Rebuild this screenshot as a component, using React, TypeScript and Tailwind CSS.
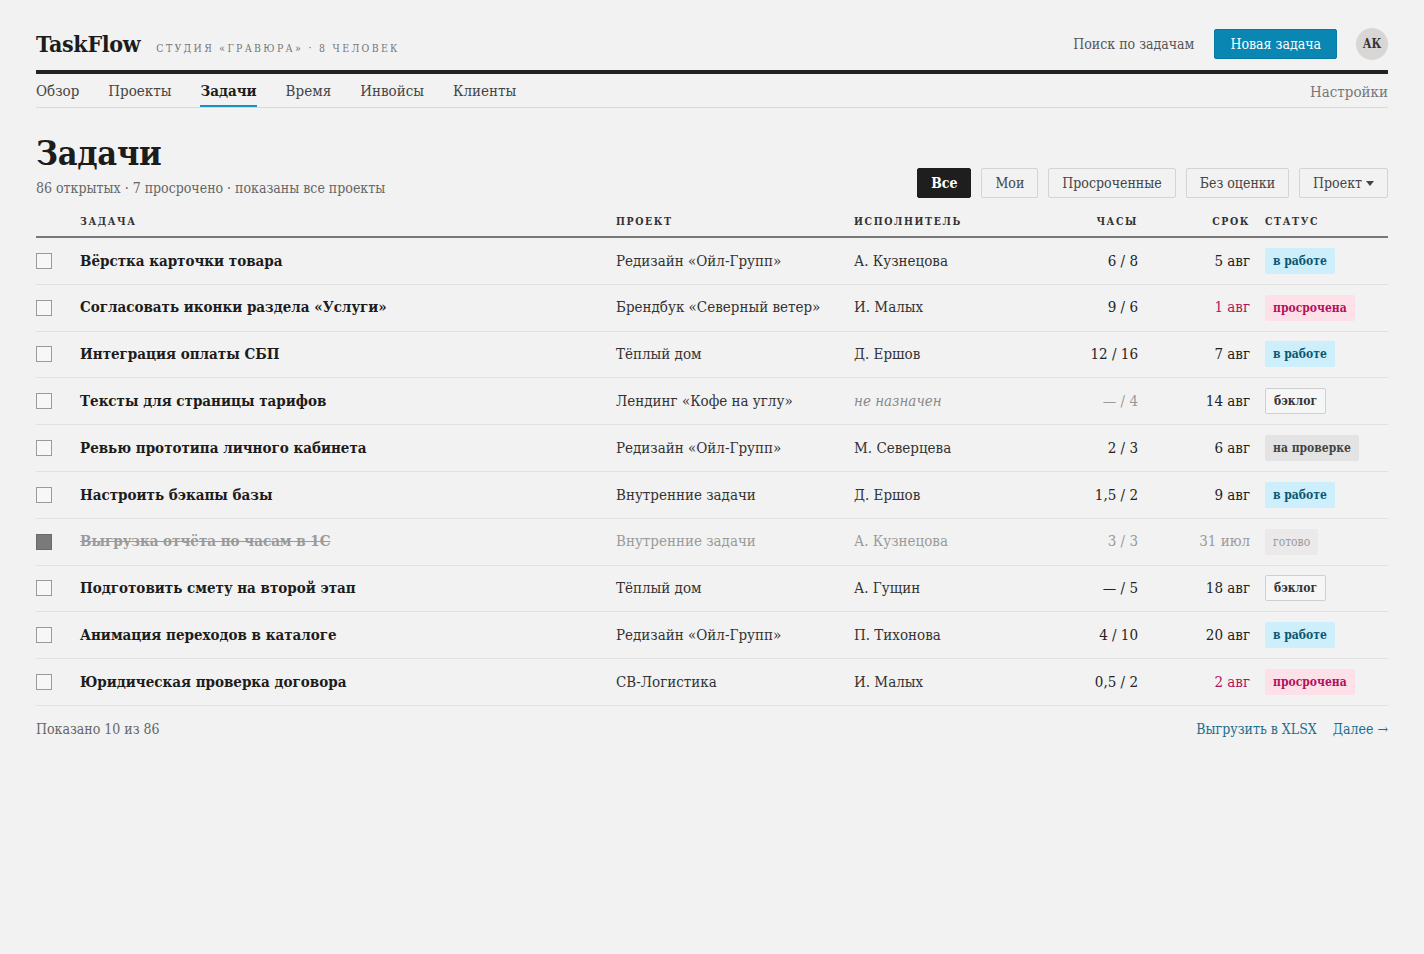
import { useState } from 'react';

type Status = 'work' | 'overdue' | 'backlog' | 'review' | 'done';

type Task = {
  title: string;
  project: string;
  assignee: string | null;
  hours: string;
  spentMissing?: boolean;
  due: string;
  status: Status;
};

const tasks: Task[] = [
  { title: 'Вёрстка карточки товара', project: 'Редизайн «Ойл-Групп»', assignee: 'А. Кузнецова', hours: '6 / 8', due: '5 авг', status: 'work' },
  { title: 'Согласовать иконки раздела «Услуги»', project: 'Брендбук «Северный ветер»', assignee: 'И. Малых', hours: '9 / 6', due: '1 авг', status: 'overdue' },
  { title: 'Интеграция оплаты СБП', project: 'Тёплый дом', assignee: 'Д. Ершов', hours: '12 / 16', due: '7 авг', status: 'work' },
  { title: 'Тексты для страницы тарифов', project: 'Лендинг «Кофе на углу»', assignee: null, hours: '— / 4', spentMissing: true, due: '14 авг', status: 'backlog' },
  { title: 'Ревью прототипа личного кабинета', project: 'Редизайн «Ойл-Групп»', assignee: 'М. Северцева', hours: '2 / 3', due: '6 авг', status: 'review' },
  { title: 'Настроить бэкапы базы', project: 'Внутренние задачи', assignee: 'Д. Ершов', hours: '1,5 / 2', due: '9 авг', status: 'work' },
  { title: 'Выгрузка отчёта по часам в 1С', project: 'Внутренние задачи', assignee: 'А. Кузнецова', hours: '3 / 3', due: '31 июл', status: 'done' },
  { title: 'Подготовить смету на второй этап', project: 'Тёплый дом', assignee: 'А. Гущин', hours: '— / 5', due: '18 авг', status: 'backlog' },
  { title: 'Анимация переходов в каталоге', project: 'Редизайн «Ойл-Групп»', assignee: 'П. Тихонова', hours: '4 / 10', due: '20 авг', status: 'work' },
  { title: 'Юридическая проверка договора', project: 'СВ-Логистика', assignee: 'И. Малых', hours: '0,5 / 2', due: '2 авг', status: 'overdue' },
];

const statusLabel: Record<Status, string> = {
  work: 'в работе',
  overdue: 'просрочена',
  backlog: 'бэклог',
  review: 'на проверке',
  done: 'готово',
};

const statusClass: Record<Status, string> = {
  work: 'bg-[#cdeefb] text-[#0b5873] font-bold',
  overdue: 'bg-[#fde0e8] text-[#b3125c] font-bold',
  backlog: 'bg-[#f6f6f6] text-[#333] border border-[#cfcfcf] font-bold',
  review: 'bg-[#e3e3e3] text-[#444] font-bold',
  done: 'bg-[#ebe9e9] text-[#9a9a9a]',
};

const nav = ['Обзор', 'Проекты', 'Задачи', 'Время', 'Инвойсы', 'Клиенты'];
const filters = ['Все', 'Мои', 'Просроченные', 'Без оценки'];

function Row({ t }: { t: Task }) {
  const done = t.status === 'done';
  return (
    <div className={`grid grid-cols-[44px_536px_238px_200px_84px_112px_1fr] items-center h-[46.8px] border-b border-[#e2e2e2] ${done ? 'text-[#9a9a9a]' : 'text-[#222]'}`}>
      <div>
        {done ? (
          <div className="w-[16px] h-[16px] bg-[#7a7a7a] border border-[#6a6a6a]" />
        ) : (
          <div className="w-[16px] h-[16px] border border-[#9a9a9a] bg-[#f7f7f7]" />
        )}
      </div>
      <div className={`text-[15px] font-bold ${done ? 'line-through text-[#9a9a9a]' : 'text-[#1c1c1c]'}`}>{t.title}</div>
      <div className={`text-[15px] ${done ? 'text-[#9a9a9a]' : 'text-[#333]'}`}>{t.project}</div>
      <div className="text-[15px]">
        {t.assignee ? (
          <span className={done ? 'text-[#9a9a9a]' : 'text-[#333]'}>{t.assignee}</span>
        ) : (
          <span className="italic text-[#8a8a8a]">не назначен</span>
        )}
      </div>
      <div className={`text-[15px] text-right ${t.spentMissing ? 'text-[#9a9a9a]' : done ? 'text-[#9a9a9a]' : 'text-[#222]'}`}>{t.hours}</div>
      <div className={`text-[15px] text-right ${t.status === 'overdue' ? 'text-[#b3125c]' : done ? 'text-[#9a9a9a]' : 'text-[#222]'}`}>{t.due}</div>
      <div className="pl-[15px]">
        <span className={`inline-flex items-center h-[26px] px-[8px] text-[12px] rounded-[2px] ${statusClass[t.status]}`}>{statusLabel[t.status]}</span>
      </div>
    </div>
  );
}

export default function App() {
  const [active, setActive] = useState('Все');
  return (
    <div className="min-h-[954px] bg-[#f2f2f2] text-[#222] font-['DejaVu_Serif_Condensed','DejaVu_Serif',serif] font-stretch-condensed">
      <div className="mx-auto w-[1352px] pt-[29px]">
        <header className="flex items-center justify-between h-[30px]">
          <div className="flex items-baseline gap-[16px]">
            <span className="text-[23px] font-bold tracking-[-0.3px] text-[#1c1c1c]">TaskFlow</span>
            <span className="text-[10.5px] uppercase tracking-[2.3px] text-[#777]">Студия «Гравюра» · 8 человек</span>
          </div>
          <div className="flex items-center">
            <button className="text-[14px] text-[#555] mr-[20px]">Поиск по задачам</button>
            <button className="h-[30px] px-[15px] bg-[#0a86b3] text-white text-[14px] rounded-[2px] border border-[#067aa3]">Новая задача</button>
            <div className="ml-[19px] w-[32px] h-[32px] rounded-full bg-[#d9d6d6] flex items-center justify-center text-[12px] font-bold text-[#333]">АК</div>
          </div>
        </header>
        <div className="mt-[11px] h-[4px] bg-[#222]" />
        <nav className="flex items-center justify-between border-b border-[#d9d9d9] h-[34px]">
          <div className="flex gap-[29px] h-full">
            {nav.map((n) => (
              <a key={n} className={`h-full flex items-center pt-[3px] text-[15px] border-b-2 ${n === 'Задачи' ? 'border-[#1890c0] font-bold text-[#1c1c1c]' : 'border-transparent text-[#444]'}`}>{n}</a>
            ))}
          </div>
          <a className="text-[15px] text-[#777] pt-[3px]">Настройки</a>
        </nav>

        <section className="flex items-end justify-between mt-[25px]">
          <div>
            <h1 className="text-[34px] font-bold leading-[40px] tracking-[-0.3px] text-[#1c1c1c]">Задачи</h1>
            <p className="text-[14px] text-[#666] mt-[5px]">86 открытых · 7 просрочено · показаны все проекты</p>
          </div>
          <div className="flex gap-[10px] mb-[1px]">
            {filters.map((f) => (
              <button
                key={f}
                onClick={() => setActive(f)}
                className={`h-[30px] px-[13px] text-[14px] rounded-[2px] border ${active === f ? 'bg-[#1e1e1e] border-[#1e1e1e] text-white font-bold' : 'border-[#d4d4d4] text-[#444]'}`}
              >
                {f}
              </button>
            ))}
            <button className="h-[30px] px-[13px] text-[14px] rounded-[2px] border border-[#d4d4d4] text-[#444] flex items-center gap-[4px]">
              Проект
              <svg width="8" height="5" viewBox="0 0 8 5"><path d="M0 0h8L4 5z" fill="#444" /></svg>
            </button>
          </div>
        </section>

        <div className="mt-[8px]">
          <div className="grid grid-cols-[44px_536px_238px_200px_84px_112px_1fr] items-center h-[31px] border-b-2 border-[#777] text-[10.5px] font-bold uppercase tracking-[1.6px] text-[#333]">
            <div />
            <div>Задача</div>
            <div>Проект</div>
            <div>Исполнитель</div>
            <div className="text-right">Часы</div>
            <div className="text-right">Срок</div>
            <div className="pl-[15px]">Статус</div>
          </div>
          {tasks.map((t) => (
            <Row key={t.title} t={t} />
          ))}
        </div>

        <footer className="flex items-center justify-between mt-[13px] text-[14px]">
          <span className="text-[#666]">Показано 10 из 86</span>
          <div className="flex gap-[16px] text-[#1a6f90]">
            <a>Выгрузить в XLSX</a>
            <a>Далее →</a>
          </div>
        </footer>
      </div>
    </div>
  );
}
